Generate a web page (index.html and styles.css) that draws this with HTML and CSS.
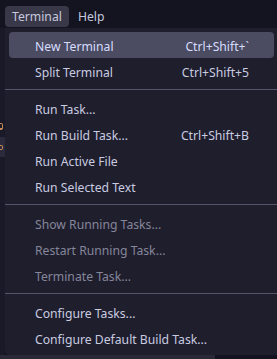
FILE: index.html
```html
<!DOCTYPE html>
<html lang="en">
  <head>
    <meta charset="UTF-8" />
    <meta name="viewport" content="width=device-width, initial-scale=1.0" />
    <title>Terminal menu</title>
    <link rel="stylesheet" href="styles.css">
  </head>

  <body>
    <div class="menubar">
      <div class="menubar-item active">Terminal</div>
      <div class="menubar-item">Help</div>
    </div>

    <div class="workbench">
      <!-- кусочек редактора, который виден слева от меню -->
      <div class="editor-edge">
        <div class="code-bit underline"></div>
        <div class="current-line">
          <div class="code-bit"></div>
        </div>
      </div>

      <div class="menu">
        <div class="menu-item selected">
          <span>New Terminal</span>
          <span class="keybinding">Ctrl+Shift+`</span>
        </div>
        <div class="menu-item">
          <span>Split Terminal</span>
          <span class="keybinding">Ctrl+Shift+5</span>
        </div>

        <div class="separator"></div>

        <div class="menu-item"><span>Run Task...</span></div>
        <div class="menu-item">
          <span>Run Build Task...</span>
          <span class="keybinding">Ctrl+Shift+B</span>
        </div>
        <div class="menu-item"><span>Run Active File</span></div>
        <div class="menu-item"><span>Run Selected Text</span></div>

        <div class="separator"></div>

        <div class="menu-item disabled"><span>Show Running Tasks...</span></div>
        <div class="menu-item disabled"><span>Restart Running Task...</span></div>
        <div class="menu-item disabled"><span>Terminate Task...</span></div>

        <div class="separator"></div>

        <div class="menu-item"><span>Configure Tasks...</span></div>
        <div class="menu-item"><span>Configure Default Build Task...</span></div>
      </div>
    </div>

    <div class="panel-strip"></div>
  </body>
</html>
```

FILE: styles.css
```css
body {
  margin: 0;
  width: 277px;
  height: 359px;
  overflow: hidden;
  background-color: #141320;
  font-family: "Noto Sans", "Open Sans", sans-serif;
  font-size: 12.2px;
  color: #c9cce0;
}

.menubar {
  display: flex;
  gap: 2px;
  height: 22px;
  padding: 6px 5px 0;
}

.menubar-item {
  padding: 1px 7px 0;
  line-height: 20px;
  height: 20px;
  border-radius: 4px;
  color: #c6c9de;
}

.menubar-item.active {
  background-color: #393848;
}

.workbench {
  display: flex;
  height: 327px;
}

.editor-edge {
  width: 5px;
  padding-top: 95px;
  background-color: #1a1928;
}

/* обрывки кода под меню */
.code-bit {
  width: 3px;
  height: 5px;
  border-radius: 0 2px 2px 0;
  border: 1px solid #c98a5a;
  border-left: none;
  box-sizing: border-box;
}

.code-bit.underline {
  border-bottom-width: 2px;
  height: 7px;
}

.current-line {
  margin-top: 7px;
  height: 20px;
  padding-top: 8px;
  box-sizing: border-box;
  background-color: #2a2a3c;
}

.menu {
  flex: 1;
  padding: 4px 3px 4px 4px;
  background-color: #1f1e2d;
  border-radius: 0 0 0 5px;
}

.menu-item {
  display: flex;
  justify-content: space-between;
  align-items: center;
  height: 26px;
  padding: 2px 25px 0 26px;
  box-sizing: border-box;
  border-radius: 4px;
}

.menu-item.selected {
  background-color: #4b4b61;
  color: #d7dcff;
}

.menu-item.disabled {
  color: #85869a;
}

.separator {
  height: 1px;
  margin: 5px -3px 5px -4px;
  background-color: #54546a;
}

.panel-strip {
  width: 215px;
  height: 4px;
  background-color: #2a2938;
}
```
